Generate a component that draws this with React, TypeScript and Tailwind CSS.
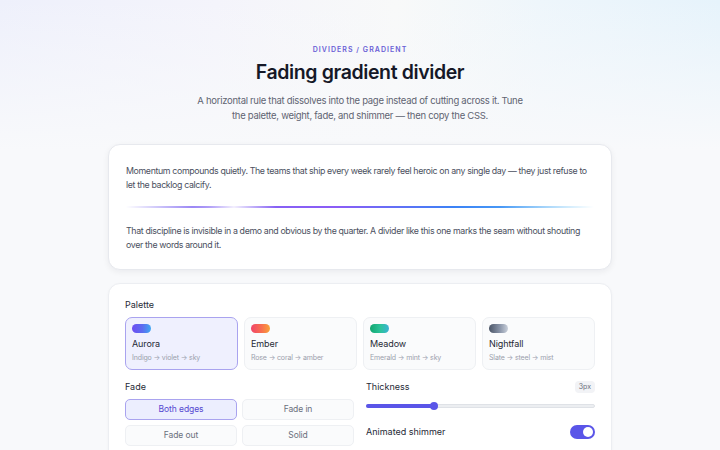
import { useState } from 'react'

type Palette = {
  id: string
  name: string
  stops: string
  swatch: string
}

const palettes: Palette[] = [
  { id: 'aurora', name: 'Aurora', stops: 'Indigo → violet → sky', swatch: 'bg-[linear-gradient(90deg,#6d4df2,#5b6cf0_55%,#3fa7f2)]' },
  { id: 'ember', name: 'Ember', stops: 'Rose → coral → amber', swatch: 'bg-[linear-gradient(90deg,#f0456a,#f86e4f_55%,#f8a23a)]' },
  { id: 'meadow', name: 'Meadow', stops: 'Emerald → mint → sky', swatch: 'bg-[linear-gradient(90deg,#12a670,#2cc39a_55%,#3bb3d4)]' },
  { id: 'nightfall', name: 'Nightfall', stops: 'Slate → steel → mist', swatch: 'bg-[linear-gradient(90deg,#4b5567,#8792a6_55%,#c9d0db)]' },
]

const fades = ['Both edges', 'Fade in', 'Fade out', 'Solid']

export default function App() {
  const [palette, setPalette] = useState('aurora')
  const [fade, setFade] = useState('Both edges')
  const [thickness] = useState(3)
  const [shimmer, setShimmer] = useState(true)

  return (
    <div className="min-h-screen bg-[#f8f9fb] bg-[linear-gradient(180deg,transparent_0px,#f8f9fb_150px),linear-gradient(90deg,#eef0fb,#f4f4fb_30%,#f8f9f9_55%,#eef6fb_75%,#e6f3fb)] font-['Inter',sans-serif] text-gray-900">
      <div className="mx-auto flex w-[504px] flex-col items-center pt-[45px]">
        <p className="text-[7px] font-semibold leading-[9px] tracking-[0.15em] text-[#6a5fd6]">DIVIDERS / GRADIENT</p>
        <h1 className="mt-[4px] text-[19.5px] font-semibold leading-[28px] tracking-[-0.02em] text-[#151827]">
          Fading gradient divider
        </h1>
        <p className="mt-[7px] w-[336px] text-center text-[9.5px] leading-[15px] tracking-[-0.03em] text-[#5f6472]">
          A horizontal rule that dissolves into the page instead of cutting across it. Tune the palette, weight, fade, and shimmer — then copy the CSS.
        </p>

        {/* preview card */}
        <div className="mt-[21px] w-full rounded-[12px] border border-[#e7e9ee] bg-white px-[17px] pb-[17px] pt-[19px] shadow-[0_2px_6px_rgba(20,24,40,0.06)]">
          <p className="text-[8.8px] leading-[14px] tracking-[-0.04em] text-[#4b5060]">
            Momentum compounds quietly. The teams that ship every week rarely feel heroic on any single day — they just refuse to let the backlog calcify.
          </p>
          <div className="relative mb-[16px] mt-[14px] h-[2px] overflow-hidden rounded-full bg-[linear-gradient(90deg,#7c6cf0,#8b5cf6_45%,#3b82f6_70%,#60c3f5)] [mask-image:linear-gradient(90deg,transparent,black_18%,black_80%,transparent)]">
            {shimmer && (
              <div className="absolute inset-y-0 left-[14%] w-[18%] bg-[linear-gradient(90deg,transparent,rgba(255,255,255,0.9)_50%,transparent)]" />
            )}
          </div>
          <p className="text-[8.8px] leading-[14px] tracking-[-0.04em] text-[#4b5060]">
            That discipline is invisible in a demo and obvious by the quarter. A divider like this one marks the seam without shouting over the words around it.
          </p>
        </div>

        {/* controls */}
        <div className="mt-[13px] w-full rounded-[12px] border border-[#eceef2] bg-white px-[16px] pb-[16px] pt-[15px] shadow-[0_1px_3px_rgba(20,24,40,0.04)]">
          <p className="text-[9px] leading-[12px] text-[#262a36]">Palette</p>
          <div className="mt-[6px] grid grid-cols-4 gap-[6px]">
            {palettes.map((p) => {
              const active = p.id === palette
              return (
                <button
                  key={p.id}
                  type="button"
                  onClick={() => setPalette(p.id)}
                  className={`flex h-[53px] flex-col items-start rounded-[7px] border px-[6px] pt-[6px] text-left ${
                    active ? 'border-[#a9a3ef] bg-[#eff0fe]' : 'border-[#eef0f3] bg-[#fafbfc]'
                  }`}
                >
                  <span className={`h-[9px] w-[19px] rounded-full ${p.swatch}`} />
                  <span className="mt-[5px] text-[9px] leading-[12px] tracking-[-0.01em] text-[#262a36]">{p.name}</span>
                  <span className="mt-[3px] text-[7px] leading-[10px] tracking-[-0.02em] text-[#9aa0ac]">{p.stops}</span>
                </button>
              )
            })}
          </div>

          <div className="mt-[11px] grid grid-cols-2 gap-[12px]">
            <div>
              <p className="text-[9px] leading-[12px] text-[#262a36]">Fade</p>
              <div className="mt-[6px] grid grid-cols-2 gap-[5px]">
                {fades.map((f) => {
                  const active = f === fade
                  return (
                    <button
                      key={f}
                      type="button"
                      onClick={() => setFade(f)}
                      className={`h-[21px] rounded-[5px] border text-[8.5px] tracking-[-0.01em] ${
                        active
                          ? 'border-[#a9a3ef] bg-[#eceefe] text-[#5548d0]'
                          : 'border-[#eef0f3] bg-[#fafbfc] text-[#6b707c]'
                      }`}
                    >
                      {f}
                    </button>
                  )
                })}
              </div>
            </div>

            <div>
              <div className="flex h-[12px] items-center justify-between">
                <p className="text-[9px] leading-[12px] text-[#262a36]">Thickness</p>
                <span className="rounded-[4px] bg-[#f2f3f6] px-[4px] py-[1px] text-[7px] text-[#6b707c]">{thickness}px</span>
              </div>
              <div className="relative mt-[11px] h-[4px] rounded-full border border-[#dfe2e7] bg-[#eceef1]">
                <div className="absolute inset-y-[-1px] left-[-1px] w-[29.5%] rounded-full bg-[#5a55e8]" />
                <div className="absolute left-[29.5%] top-1/2 h-[8px] w-[8px] -translate-x-1/2 -translate-y-1/2 rounded-full bg-[#5a55e8]" />
              </div>
              <div className="mt-[17px] flex items-center justify-between">
                <p className="text-[9px] leading-[12px] text-[#262a36]">Animated shimmer</p>
                <button
                  type="button"
                  onClick={() => setShimmer(!shimmer)}
                  className={`flex h-[14px] w-[25px] items-center rounded-full px-[2px] ${
                    shimmer ? 'justify-end bg-[#5a55e8]' : 'justify-start bg-[#d9dce2]'
                  }`}
                >
                  <span className="h-[10px] w-[10px] rounded-full bg-white" />
                </button>
              </div>
            </div>
          </div>
        </div>
      </div>
    </div>
  )
}
